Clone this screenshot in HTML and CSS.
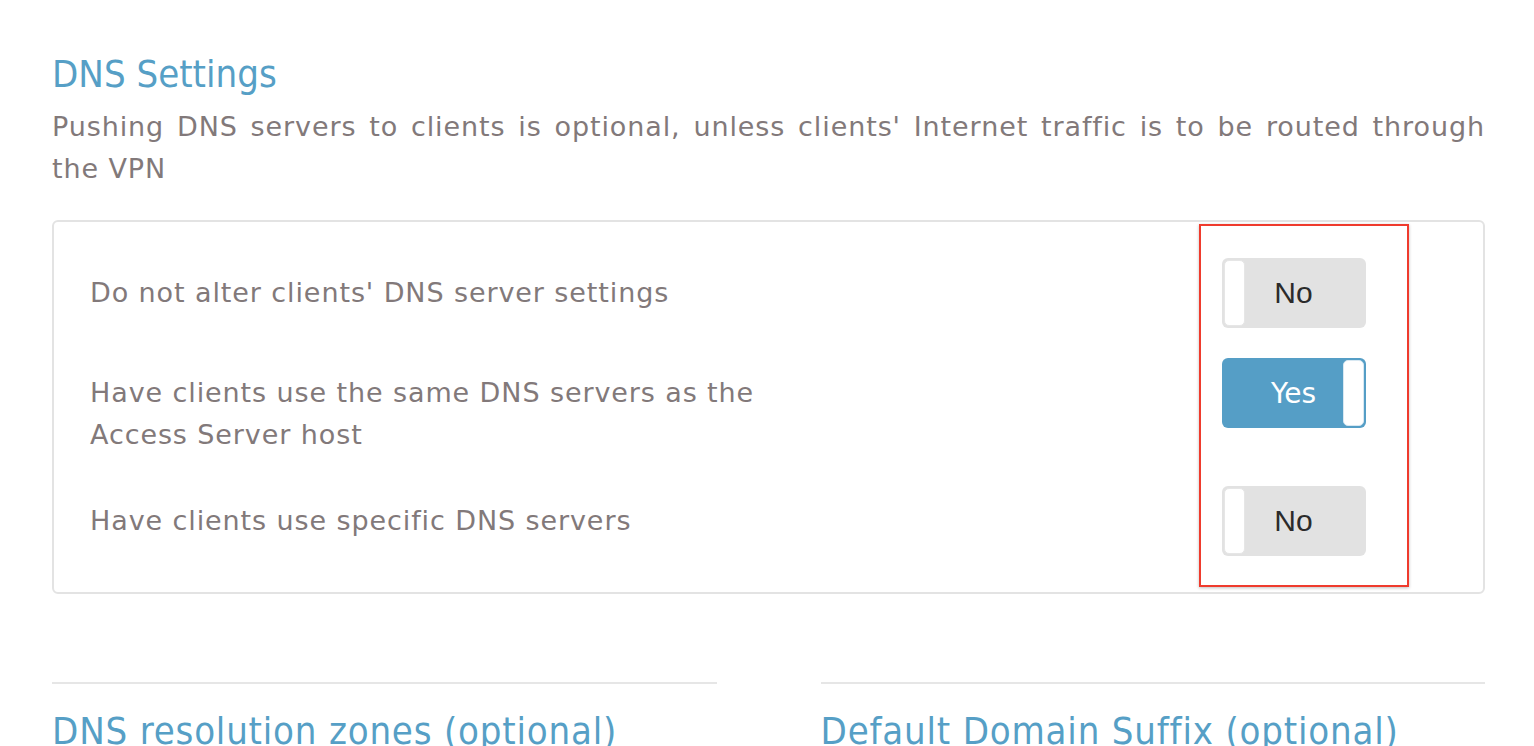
FILE: index.html
```html
<!DOCTYPE html>
<html lang="en">
<head>
<meta charset="utf-8">
<title>DNS Settings</title>
<link rel="stylesheet" href="styles.css">
</head>
<body>
<div class="page">
  <h2 class="title">DNS Settings</h2>
  <p class="desc">Pushing DNS servers to clients is optional, unless clients' Internet traffic is to be routed through the VPN</p>

  <div class="panel">
    <div class="row">
      <div class="label">Do not alter clients' DNS server settings</div>
      <div class="toggle off"><span class="knob"></span><span class="txt">No</span></div>
    </div>
    <div class="row">
      <div class="label">Have clients use the same DNS servers as the Access Server host</div>
      <div class="toggle on"><span class="txt">Yes</span><span class="knob"></span></div>
    </div>
    <div class="row">
      <div class="label">Have clients use specific DNS servers</div>
      <div class="toggle off"><span class="knob"></span><span class="txt">No</span></div>
    </div>
    <div class="highlight"></div>
  </div>

  <div class="cols">
    <section class="col">
      <hr class="rule">
      <h2 class="subtitle">DNS resolution zones (optional)</h2>
    </section>
    <section class="col">
      <hr class="rule">
      <h2 class="subtitle">Default Domain Suffix (optional)</h2>
    </section>
  </div>
</div>
</body>
</html>
```

FILE: styles.css
```css
html, body {
  margin: 0;
  padding: 0;
  background: #ffffff;
}
body {
  font-family: "DejaVu Sans", sans-serif;
  color: #82797a;
  overflow: hidden;
  height: 746px;
}
.page {
  width: 1433px;
  margin-left: 52px;
  padding-top: 52px;
}
.title {
  margin: 0;
  font-family: "DejaVu Sans Condensed", "DejaVu Sans", sans-serif;
  font-weight: normal;
  font-size: 38px;
  line-height: 44px;
  letter-spacing: 0px;
  color: #569fc6;
}
.desc {
  margin: 10px 0 0;
  font-size: 27px;
  line-height: 42px;
  letter-spacing: 0.9px;
  text-align: justify;
}
.panel {
  position: relative;
  margin-top: 30px;
  border: 2px solid #e3e3e3;
  border-radius: 6px;
  padding: 36px 117px 36px 36px;
  display: flex;
  flex-direction: column;
  gap: 30px;
}
.row {
  display: grid;
  grid-template-columns: 1fr 144px;
  align-items: start;
}
.label {
  max-width: 700px;
  padding-top: 14px;
  font-size: 27px;
  line-height: 42px;
  letter-spacing: 0.9px;
}
.toggle {
  position: relative;
  box-sizing: border-box;
  height: 70px;
  width: 144px;
  border-radius: 6px;
  display: flex;
  align-items: center;
  font-size: 28px;
  padding: 2px;
}
.toggle.off {
  background: #e2e2e2;
  color: #2b2b2b;
  font-family: "Liberation Sans", Arial, sans-serif;
  font-size: 30px;
}
.toggle.on {
  background: #559ec6;
  color: #ffffff;
  font-size: 28px;
}
.toggle .txt {
  flex: 1;
  text-align: center;
}
.toggle.off .txt {
  padding-right: 22px;
}
.toggle.on .txt {
  padding-left: 20px;
}
.knob {
  display: block;
  width: 21px;
  height: 66px;
  box-sizing: border-box;
  background: #ffffff;
  border-radius: 5px;
  border: 1px solid #e6e6e6;
}
.toggle.on .knob {
  border: 1px solid #d8e8f2;
}
.highlight {
  position: absolute;
  left: 1145px;
  top: 2px;
  width: 206px;
  height: 359px;
  border: 2px solid #ef3b2d;
  box-shadow: 0 1px 3px rgba(0, 0, 0, 0.25);
  pointer-events: none;
}
.cols {
  display: flex;
  gap: 104px;
  margin-top: 88px;
}
.col {
  flex: 1;
}
.rule {
  margin: 0;
  border: 0;
  border-top: 2px solid #e6e6e6;
}
.subtitle {
  margin: 25px 0 0;
  font-family: "DejaVu Sans Condensed", "DejaVu Sans", sans-serif;
  font-weight: normal;
  font-size: 38px;
  line-height: 44px;
  letter-spacing: 0.8px;
  color: #569fc6;
}
```
